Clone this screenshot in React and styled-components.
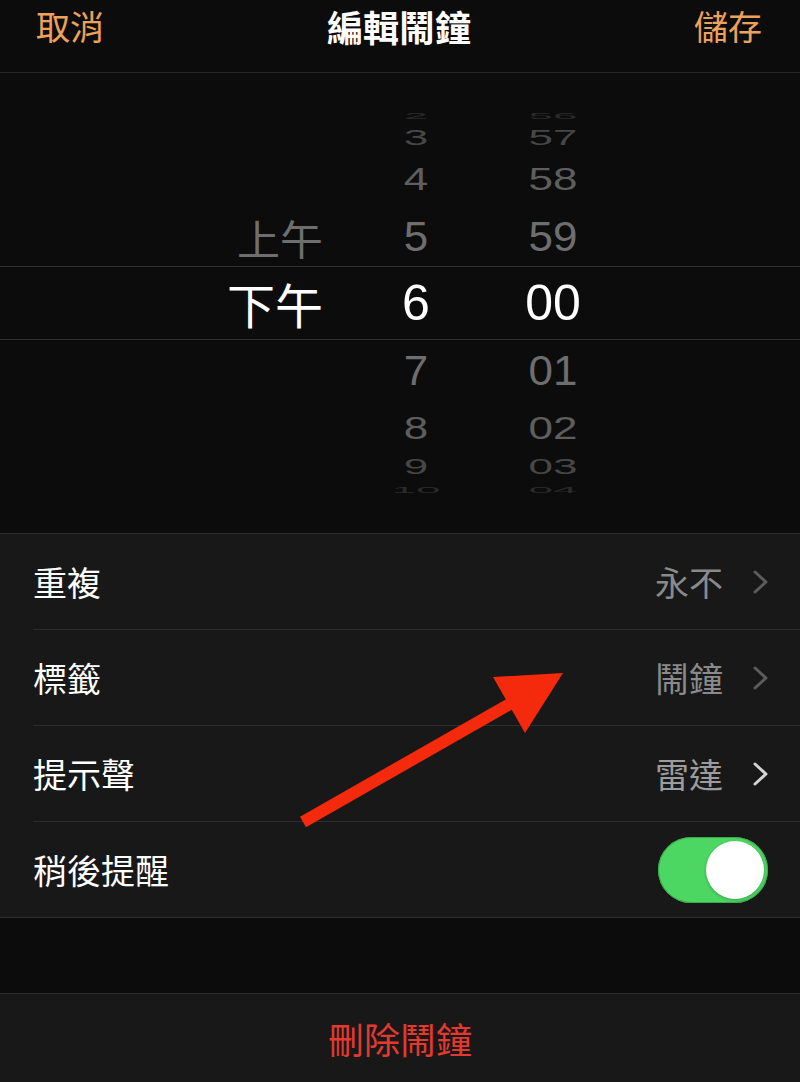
import React from "react";
import styled, { createGlobalStyle } from "styled-components";

const GlobalStyle = createGlobalStyle`
  * {
    box-sizing: border-box;
  }
  body {
    margin: 0;
    background: #0c0c0c;
  }
`;

const CJK = `"Noto Sans CJK TC", "Noto Sans", sans-serif`;
const DIGITS = `"Liberation Sans", Arial, sans-serif`;

const Page = styled.div`
  position: relative;
  width: 800px;
  height: 1082px;
  overflow: hidden;
  background: #0c0c0c;
  font-family: ${CJK};
`;

const Header = styled.header`
  display: flex;
  align-items: flex-start;
  justify-content: space-between;
  height: 73px;
  padding: 0 38px 0 36px;
  border-bottom: 1px solid #262626;
`;

const NavButton = styled.button`
  padding: 0;
  border: 0;
  background: none;
  color: #eda25c;
  font-family: ${CJK};
  font-size: 34px;
  line-height: 52px;
`;

const Title = styled.h1`
  margin: 0;
  color: #ffffff;
  font-size: 36px;
  font-weight: 700;
  line-height: 52px;
`;

const Picker = styled.div`
  display: flex;
  flex-direction: column;
  padding: 33px 0 32px;
`;

const PickerRow = styled.div`
  display: flex;
  align-items: center;
  height: ${(p) => p.$h}px;
  border-top: ${(p) => (p.$selected ? "1px solid #2f2f2f" : "0")};
  border-bottom: ${(p) => (p.$selected ? "1px solid #2f2f2f" : "0")};
`;

const Cell = styled.span`
  display: block;
  flex: none;
  width: ${(p) => p.$w}px;
  color: ${(p) => p.$color};
  font-family: ${(p) => (p.$cjk ? CJK : DIGITS)};
  font-size: ${(p) => p.$size}px;
  line-height: 1;
  text-align: ${(p) => (p.$right ? "right" : "center")};
  transform: scaleY(${(p) => p.$scale});
  white-space: nowrap;
`;

const List = styled.ul`
  margin: 0;
  padding: 0 0 0 33px;
  list-style: none;
  background: #181818;
  border-top: 1px solid #2c2c2c;
  border-bottom: 1px solid #2c2c2c;
`;

const ListRow = styled.li`
  display: flex;
  align-items: center;
  justify-content: space-between;
  box-sizing: content-box;
  height: 95px;
  padding-right: 32px;

  & + & {
    border-top: 1px solid #2e2e2e;
  }
`;

const Label = styled.span`
  color: #ffffff;
  font-size: 34px;
  line-height: 1;
`;

const Detail = styled.span`
  display: flex;
  align-items: center;
  gap: 30px;
  color: ${(p) => (p.$active ? "#9c9c9c" : "#8a8a8a")};
  font-size: 34px;
  line-height: 1;
`;

const Toggle = styled.span`
  display: flex;
  align-items: center;
  justify-content: flex-end;
  width: 110px;
  height: 66px;
  padding: 4px;
  border-radius: 33px;
  background: #4cd662;
  box-shadow: inset 0 0 0 1px #3aa94c;
`;

const Knob = styled.span`
  width: 58px;
  height: 58px;
  border-radius: 50%;
  background: #ffffff;
  box-shadow: 0 1px 3px rgba(0, 0, 0, 0.25);
`;

const Spacer = styled.div`
  height: 75px;
  background: #0c0c0c;
`;

const DeleteRow = styled.div`
  height: 90px;
  border-top: 1px solid #2c2c2c;
  background: #181818;
  color: #e5392f;
  font-size: 36px;
  line-height: 88px;
  text-align: center;
`;

const Overlay = styled.svg`
  position: absolute;
  top: 0;
  left: 0;
  pointer-events: none;
`;

const rows = [
  { h: 20, scale: 0.2, color: "#2a2a2a", hour: "2", min: "56" },
  { h: 24, scale: 0.48, color: "#474747", hour: "3", min: "57" },
  { h: 58, scale: 0.73, color: "#5e5e5e", hour: "4", min: "58" },
  { h: 58, scale: 0.95, color: "#6e6e6e", hour: "5", min: "59", ampm: "上午" },
  { h: 74, selected: true, hour: "6", min: "00", ampm: "下午" },
  { h: 61, scale: 0.95, color: "#6e6e6e", hour: "7", min: "01" },
  { h: 54, scale: 0.73, color: "#5e5e5e", hour: "8", min: "02" },
  { h: 24, scale: 0.48, color: "#474747", hour: "9", min: "03" },
  { h: 22, scale: 0.2, color: "#2a2a2a", hour: "10", min: "04" },
];

function Chevron({ light }) {
  return (
    <svg width="15" height="24" viewBox="0 0 15 24">
      <polyline
        points="2,2 13,12 2,22"
        fill="none"
        stroke={light ? "#d4d4d4" : "#5c5c5c"}
        strokeWidth="3"
        strokeLinecap="round"
        strokeLinejoin="round"
      />
    </svg>
  );
}

function App() {
  return (
    <Page>
      <GlobalStyle />
      <Header>
        <NavButton>取消</NavButton>
        <Title>編輯鬧鐘</Title>
        <NavButton>儲存</NavButton>
      </Header>

      <Picker>
        {rows.map((row) => {
          const color = row.selected ? "#ffffff" : row.color;
          const scale = row.selected ? 1 : row.scale;
          const size = row.selected ? 50 : 44;
          return (
            <PickerRow key={row.hour} $h={row.h} $selected={row.selected}>
              <Cell
                $cjk
                $right
                $w={323}
                $color={color}
                $scale={scale}
                $size={row.selected ? 48 : 43}
              >
                {row.ampm || ""}
              </Cell>
              <Cell $w={186} $color={color} $scale={scale} $size={size}>
                {row.hour}
              </Cell>
              <Cell $w={88} $color={color} $scale={scale} $size={size}>
                {row.min}
              </Cell>
            </PickerRow>
          );
        })}
      </Picker>

      <List>
        <ListRow>
          <Label>重複</Label>
          <Detail>
            永不
            <Chevron />
          </Detail>
        </ListRow>
        <ListRow>
          <Label>標籤</Label>
          <Detail>
            鬧鐘
            <Chevron />
          </Detail>
        </ListRow>
        <ListRow>
          <Label>提示聲</Label>
          <Detail $active>
            雷達
            <Chevron light />
          </Detail>
        </ListRow>
        <ListRow>
          <Label>稍後提醒</Label>
          <Toggle>
            <Knob />
          </Toggle>
        </ListRow>
      </List>

      <Spacer />
      <DeleteRow>刪除鬧鐘</DeleteRow>

      <Overlay width="800" height="1082" viewBox="0 0 800 1082">
        <line x1="303" y1="822" x2="515" y2="701" stroke="#f52a0c" strokeWidth="12" />
        <polygon points="493,677 563,673 525,733" fill="#f52a0c" />
      </Overlay>
    </Page>
  );
}

export default App;
